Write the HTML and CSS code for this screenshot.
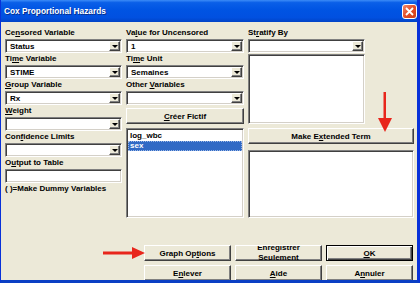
FILE: index.html
```html
<!DOCTYPE html>
<html lang="en">
  <head>
    <meta charset="UTF-8" />
    <title>Cox Proportional Hazards</title>
    <link rel="stylesheet" href="styles.css">
  </head>
  <body>
    <div class="window">
      <div class="titlebar">
        <span class="title">Cox Proportional Hazards</span>
        <span class="close">
          <svg width="9" height="9" viewBox="0 0 9 9"><path d="M1 1 L8 8 M8 1 L1 8" stroke="#fff" stroke-width="1.8" /></svg>
        </span>
      </div>
      <div class="body">
        <div class="columns">
          <div class="col">
            <div class="label">Ce<u>n</u>sored Variable</div>
            <div class="combo"><span>Status</span><i class="drop"></i></div>
            <div class="label">Ti<u>m</u>e Variable</div>
            <div class="combo"><span>STIME</span><i class="drop"></i></div>
            <div class="label"><u>G</u>roup Variable</div>
            <div class="combo"><span>Rx</span><i class="drop"></i></div>
            <div class="label"><u>W</u>eight</div>
            <div class="combo"><span></span><i class="drop"></i></div>
            <div class="label">Con<u>f</u>idence Limits</div>
            <div class="combo"><span></span><i class="drop"></i></div>
            <div class="label">O<u>u</u>tput to Table</div>
            <div class="textbox"></div>
            <div class="note">( )=Make Dummy Variables</div>
          </div>
          <div class="col">
            <div class="label">Va<u>l</u>ue for Uncensored</div>
            <div class="combo"><span>1</span><i class="drop"></i></div>
            <div class="label">Ti<u>m</u>e Unit</div>
            <div class="combo"><span>Semaines</span><i class="drop"></i></div>
            <div class="label">Other <u>V</u>ariables</div>
            <div class="combo"><span></span><i class="drop"></i></div>
            <div class="btn wide create"><u>C</u>réer Fictif</div>
            <div class="listbox vars">
              <div class="item">log_wbc</div>
              <div class="item selected">sex</div>
            </div>
          </div>
          <div class="col">
            <div class="label short">St<u>r</u>atify By</div>
            <div class="combo short"><span></span><i class="drop"></i></div>
            <div class="listbox strata"></div>
            <div class="btn wide extended">Make E<u>x</u>tended Term</div>
            <div class="listbox terms"></div>
          </div>
        </div>
        <div class="buttons">
          <div class="btn">Graph Op<u>t</u>ions</div>
          <div class="btn two-line">Enregistrer<br>Seulement</div>
          <div class="btn default"><u>O</u>K</div>
          <div class="btn">E<u>n</u>lever</div>
          <div class="btn"><u>A</u>ide</div>
          <div class="btn">A<u>n</u>nuler</div>
        </div>
      </div>
      <svg class="arrow arrow-down" width="16" height="42" viewBox="0 0 16 42">
        <rect x="6.5" y="0" width="2.5" height="28" fill="#e8261c" />
        <polygon points="1,26 15,26 8,40" fill="#e8261c" />
      </svg>
      <svg class="arrow arrow-right" width="44" height="14" viewBox="0 0 44 14">
        <rect x="0" y="5.5" width="31" height="3" fill="#e8261c" />
        <polygon points="29,1 42,7 29,13" fill="#e8261c" />
      </svg>
    </div>
  </body>
</html>
```

FILE: styles.css
```css
body {
  margin: 0;
  background-color: #0a3fc4;
}

.window {
  position: relative;
  width: 420px;
  height: 283px;
  box-sizing: border-box;
  background-color: #ece9d8;
  border-left: 1px solid #0831d9;
  border-right: 3px solid #0831d9;
  border-bottom: 3px solid #0a3fc4;
  font: bold 8px "Liberation Sans", Arial, sans-serif;
  color: #000;
  overflow: hidden;
}

.titlebar {
  display: flex;
  align-items: center;
  justify-content: space-between;
  height: 22px;
  margin-left: -1px;
  margin-right: -3px;
  padding: 0 3px 0 4px;
  background: linear-gradient(#3c8cf7 0, #0a5fe8 12%, #0054e3 45%, #0150e0 80%, #0143c6 100%);
}

.title {
  color: #fff;
  font-size: 8.3px;
  text-shadow: 1px 1px #0a2f8a;
}

.close {
  display: flex;
  align-items: center;
  justify-content: center;
  width: 13px;
  height: 13px;
  border: 1px solid #fff;
  border-radius: 3px;
  background: linear-gradient(135deg, #f0866a, #e24a24 55%, #c8401c);
}

.body {
  padding: 5px 3px 0 4px;
}

.columns {
  display: flex;
  gap: 4px;
  align-items: flex-start;
}

.col {
  display: flex;
  flex-direction: column;
  width: 117px;
}

.col:nth-child(2) {
  width: 118px;
}

.col:nth-child(3) {
  width: 166px;
}

.label {
  height: 12px;
  line-height: 12px;
  white-space: nowrap;
}

.short {
  width: 117px;
}

.combo,
.textbox,
.listbox {
  box-sizing: border-box;
  background-color: #fff;
  border: 1px solid;
  border-color: #808080 #fff #fff #808080;
  box-shadow: inset 1px 1px #404040, inset -1px -1px #d4d0c8;
}

.combo {
  display: flex;
  align-items: center;
  justify-content: space-between;
  height: 14px;
  padding: 1px 1px 1px 4px;
}

.drop {
  position: relative;
  width: 11px;
  height: 10px;
  box-sizing: border-box;
  background-color: #ece9d8;
  border: 1px solid;
  border-color: #fff #404040 #404040 #fff;
  box-shadow: inset -1px -1px #808080;
}

.drop::after {
  content: "";
  position: absolute;
  left: 2px;
  top: 3px;
  border-left: 3px solid transparent;
  border-right: 3px solid transparent;
  border-top: 3px solid #000;
}

.textbox {
  height: 14px;
}

.note {
  margin-top: 1px;
  line-height: 10px;
  white-space: nowrap;
}

.listbox {
  padding: 2px 1px;
}

.vars {
  height: 90px;
  margin-top: 4px;
}

.strata {
  width: 117px;
  height: 70px;
  margin-top: 1px;
}

.terms {
  height: 68px;
  margin-top: 6px;
}

.item {
  height: 10px;
  line-height: 10px;
  padding-left: 2px;
  box-sizing: border-box;
}

.item.selected {
  background-color: #316ac5;
  color: #fff;
  outline: 1px dotted #9cb8e6;
  outline-offset: -1px;
}

.btn {
  display: flex;
  align-items: center;
  justify-content: center;
  height: 16px;
  box-sizing: border-box;
  background-color: #ece9d8;
  border: 1px solid;
  border-color: #fff #404040 #404040 #fff;
  box-shadow: inset -1px -1px #808080;
  text-align: center;
  white-space: nowrap;
}

.create {
  margin-top: 3px;
}

.extended {
  margin-top: 4px;
}

.btn.two-line {
  line-height: 10px;
  overflow: hidden;
}

.btn.default {
  border: 1px solid #000;
  box-shadow: inset 1px 1px #fff, inset -1px -1px #404040, inset -2px -2px #808080;
}

.buttons {
  display: grid;
  grid-template-columns: 87px 87px 87px;
  grid-auto-rows: 16px;
  gap: 4px;
  margin: 27px 0 0 139px;
}

.arrow {
  position: absolute;
}

.arrow-down {
  left: 376px;
  top: 92px;
}

.arrow-right {
  left: 102px;
  top: 246px;
}
```
